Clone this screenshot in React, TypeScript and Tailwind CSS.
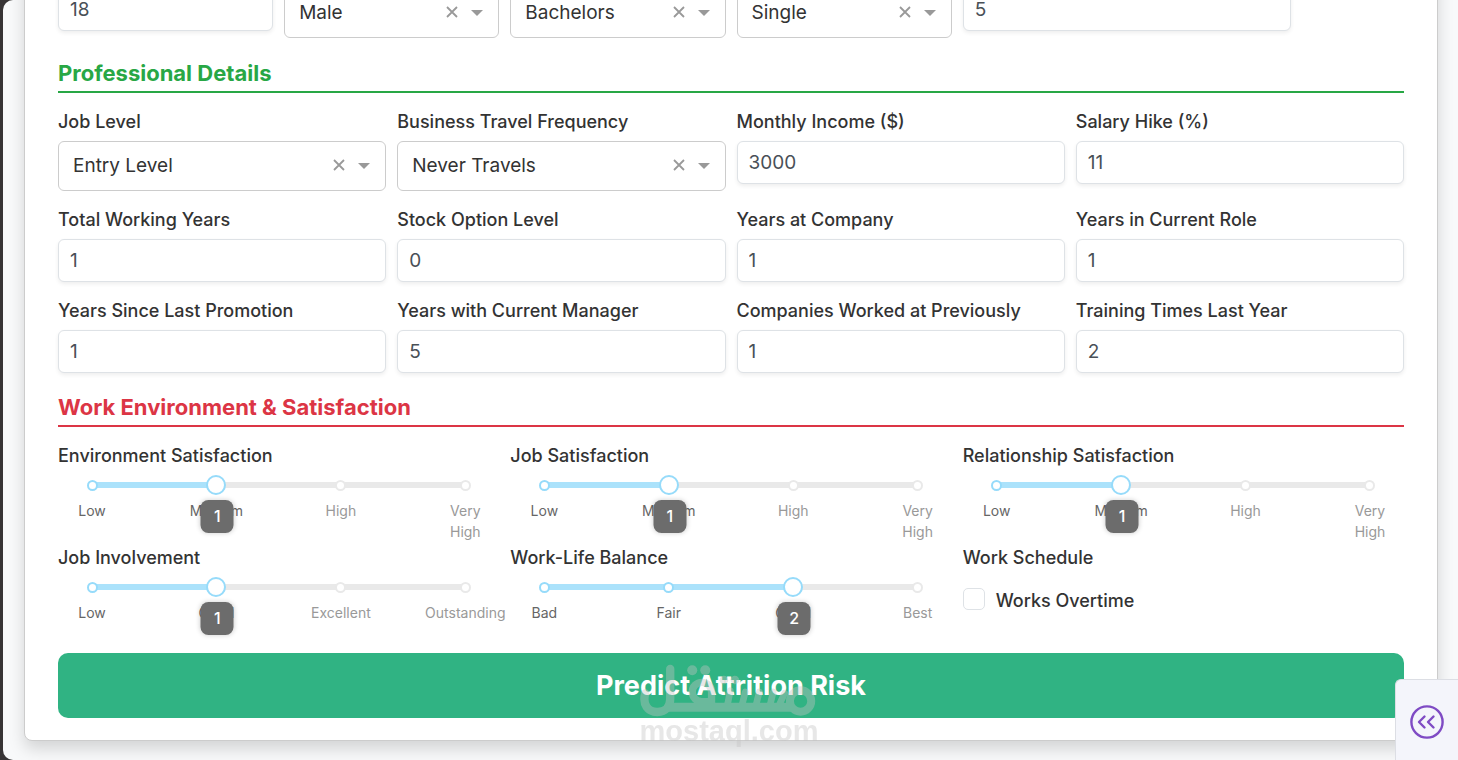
import React, { useId, useState } from "react";

function TextField({ label, value }: { label: string; value: string }) {
  const id = useId();
  return (
    <div className="flex flex-col gap-[5px]">
      <label htmlFor={id} className="text-[18px] leading-[28px] font-medium text-[#333]">
        {label}
      </label>
      <input
        id={id}
        type="text"
        inputMode="numeric"
        defaultValue={value}
        className="h-[43px] w-full rounded-md border border-[#dee2e6] bg-white px-[11px] text-[19px] text-[#495057] shadow-[0_2px_4px_rgba(0,0,0,0.07)] outline-none"
      />
    </div>
  );
}

function SelectField({ label, options }: { label: string; options: string[] }) {
  const id = useId();
  const [value, setValue] = useState(options[0]);
  return (
    <div className="flex flex-col gap-[5px]">
      <label htmlFor={id} className="text-[18px] leading-[28px] font-medium text-[#333]">
        {label}
      </label>
      <div className="flex h-[50px] items-center rounded-md border border-[#ccc] bg-white pr-[15px] pl-[14px]">
        <select
          id={id}
          value={value}
          onChange={(e) => setValue(e.target.value)}
          className="min-w-0 flex-1 appearance-none bg-transparent text-[19px] text-[#333] outline-none"
        >
          <option value="" />
          {options.map((o) => (
            <option key={o} value={o}>
              {o}
            </option>
          ))}
        </select>
        <button type="button" aria-label={`Clear ${label}`} onClick={() => setValue("")} className="mr-[13px] pb-[2px]">
          <svg width="12" height="12" viewBox="0 0 12 12" stroke="#999" strokeWidth="1.8" fill="none">
            <path d="M1 1L11 11M11 1L1 11" />
          </svg>
        </button>
        <svg width="12" height="6" viewBox="0 0 12 6" fill="#999" aria-hidden="true">
          <path d="M0 0H12L6 6Z" />
        </svg>
      </div>
    </div>
  );
}

function SliderField({ label, marks, initial }: { label: string; marks: string[]; initial: number }) {
  const id = useId();
  const [value, setValue] = useState(initial);
  const last = marks.length - 1;
  const percent = (value / last) * 100;
  return (
    <div className="flex flex-col">
      <label htmlFor={id} className="text-[18px] leading-[28px] font-medium text-[#333]">
        {label}
      </label>
      <div className="relative mx-[34px] pt-[5px]">
        <div className="grid items-center">
          <div className="[grid-area:1/1] h-[6px] rounded-full bg-[#e9e9e9]">
            <div className="h-full rounded-full bg-[#abe2fb]" style={{ width: `${percent}%` }} />
          </div>
          <div className="[grid-area:1/1] flex justify-between">
            {marks.map((m, i) => (
              <span key={m} className="flex w-0 justify-center">
                <span
                  className={`h-[11px] w-[11px] shrink-0 rounded-full border-2 bg-white ${
                    i <= value ? "border-[#96dbfa]" : "border-[#e9e9e9]"
                  }`}
                />
              </span>
            ))}
          </div>
          <input
            id={id}
            type="range"
            min={0}
            max={last}
            value={value}
            onChange={(e) => setValue(Number(e.target.value))}
            className="[grid-area:1/1] z-10 -mx-[10px] h-[20px] appearance-none bg-transparent outline-none [&::-webkit-slider-thumb]:h-[20px] [&::-webkit-slider-thumb]:w-[20px] [&::-webkit-slider-thumb]:appearance-none [&::-webkit-slider-thumb]:rounded-full [&::-webkit-slider-thumb]:border-2 [&::-webkit-slider-thumb]:border-solid [&::-webkit-slider-thumb]:border-[#96dbfa] [&::-webkit-slider-thumb]:bg-white"
          />
        </div>
        <div className="mt-[5px] flex justify-between text-[14px] leading-[21px]">
          {marks.map((m, i) => (
            <span key={m} className="flex w-0 justify-center">
              <span className={`w-min shrink-0 text-center ${i <= value ? "text-[#666]" : "text-[#999]"}`}>{m}</span>
            </span>
          ))}
        </div>
        <output
          htmlFor={id}
          className="absolute top-[30px] z-20 ml-px flex h-[33px] w-[33px] -translate-x-1/2 items-center justify-center rounded-lg bg-[#6c6c6c] pb-px text-[16px] font-medium text-white shadow-[0_0_5px_rgba(0,0,0,0.2)]"
          style={{ left: `${percent}%` }}
        >
          {value}
        </output>
      </div>
    </div>
  );
}

function Watermark() {
  return (
    <div className="pointer-events-none fixed bottom-[15px] left-1/2 flex -translate-x-1/2 flex-col items-center opacity-40">
      <svg width="178" height="54" viewBox="30 24 534 162" fill="none" stroke="#c3c3c3" strokeLinecap="round" strokeLinejoin="round" aria-hidden="true">
        <path strokeWidth="25" d="M47 112C38 146 55 168 83 168C110 168 122 148 122 128V39" />
        <path strokeWidth="27" strokeLinecap="butt" d="M108 154H490" />
        <path strokeWidth="22" d="M246 150V108A29 29 0 1 0 217 137H246" />
        <path strokeWidth="20" d="M294 145L302 104M338 145L347 108M380 145L389 108M422 145L431 108M451 142L465 112" />
        <circle cx="513" cy="135" r="32" strokeWidth="24" />
        <g fill="#c3c3c3" stroke="none">
          <circle cx="188" cy="43" r="15" />
          <circle cx="227" cy="43" r="15" />
          <circle cx="283" cy="72" r="13" />
          <circle cx="316" cy="72" r="13" />
        </g>
      </svg>
      <span className="font-['Liberation_Sans',sans-serif] text-[29px] leading-[27px] font-bold text-[#c3c3c3]">
        mostaql.com
      </span>
    </div>
  );
}

function SectionTitle({ children, tone }: { children: React.ReactNode; tone: string }) {
  return <h2 className={`mt-5 mb-[15px] border-b-2 pb-[4px] text-[22px] leading-[28px] font-bold ${tone}`}>{children}</h2>;
}

const satisfaction = ["Low", "Medium", "High", "Very High"];

export default function App() {
  return (
    <div className="h-screen overflow-hidden bg-[#373435] pl-[3px] font-['Inter',sans-serif]">
      <main className="flex h-full flex-col justify-end rounded-l-[10px] bg-[#f8f9fa] pr-[20px] pb-[19px] pl-[21px]">
        <form
          onSubmit={(e) => e.preventDefault()}
          className="shrink-0 rounded-lg border border-[#ccc] bg-white px-[33px] pb-[22px] shadow-[0_8px_16px_rgba(0,0,0,0.15)]"
        >
          <div className="grid grid-cols-12 items-start gap-x-[11px] pb-px">
            <div className="col-span-2">
              <TextField label="Age" value="18" />
            </div>
            <div className="col-span-2">
              <SelectField label="Gender" options={["Male", "Female"]} />
            </div>
            <div className="col-span-2">
              <SelectField label="Education" options={["Bachelors", "Masters"]} />
            </div>
            <div className="col-span-2">
              <SelectField label="Marital Status" options={["Single", "Married"]} />
            </div>
            <div className="col-span-3">
              <TextField label="Distance From Home" value="5" />
            </div>
          </div>

          <SectionTitle tone="border-[#28a745] text-[#28a745]">Professional Details</SectionTitle>
          <div className="grid grid-cols-4 items-start gap-x-[11px] gap-y-[15px]">
            <SelectField label="Job Level" options={["Entry Level", "Senior Level"]} />
            <SelectField label="Business Travel Frequency" options={["Never Travels", "Travels Often"]} />
            <TextField label="Monthly Income ($)" value="3000" />
            <TextField label="Salary Hike (%)" value="11" />
            <TextField label="Total Working Years" value="1" />
            <TextField label="Stock Option Level" value="0" />
            <TextField label="Years at Company" value="1" />
            <TextField label="Years in Current Role" value="1" />
            <TextField label="Years Since Last Promotion" value="1" />
            <TextField label="Years with Current Manager" value="5" />
            <TextField label="Companies Worked at Previously" value="1" />
            <TextField label="Training Times Last Year" value="2" />
          </div>

          <SectionTitle tone="border-[#dc3545] text-[#dc3545]">Work Environment &amp; Satisfaction</SectionTitle>
          <div className="grid auto-rows-[102px] grid-cols-3 gap-x-[11px]">
            <SliderField label="Environment Satisfaction" marks={satisfaction} initial={1} />
            <SliderField label="Job Satisfaction" marks={satisfaction} initial={1} />
            <SliderField label="Relationship Satisfaction" marks={satisfaction} initial={1} />
            <SliderField label="Job Involvement" marks={["Low", "Good", "Excellent", "Outstanding"]} initial={1} />
            <SliderField label="Work-Life Balance" marks={["Bad", "Fair", "Good", "Best"]} initial={2} />
            <fieldset>
              <legend className="text-[18px] leading-[28px] font-medium text-[#333]">Work Schedule</legend>
              <label className="mt-[15px] flex items-start gap-[11px] text-[18px] leading-[28px] font-medium text-[#333]">
                <input
                  type="checkbox"
                  className="mt-px h-[22px] w-[22px] appearance-none rounded-[5px] border border-[#dee2e6] bg-white checked:bg-[#0d6efd]"
                />
                Works Overtime
              </label>
            </fieldset>
          </div>

          <button
            type="submit"
            className="mt-[7px] h-[65px] w-full rounded-[10px] bg-[#30b383] pt-[2px] text-[27px] font-bold text-white"
          >
            Predict Attrition Risk
          </button>
        </form>
      </main>

      <Watermark />

      <button
        type="button"
        aria-label="Open side panel"
        className="fixed right-0 bottom-0 flex h-[81px] w-[63px] items-center justify-center rounded-tl-md border-t border-l border-[#dcdee4] bg-[#f4f5fb] pt-[3px]"
      >
        <svg width="34" height="34" viewBox="0 0 34 34" fill="none" stroke="#7f4bc4" strokeWidth="2.4" strokeLinecap="round" strokeLinejoin="round">
          <circle cx="17" cy="17" r="15.6" />
          <path d="M14.5 11.5L9 17L14.5 22.5M23.5 11.5L18 17L23.5 22.5" />
        </svg>
      </button>
    </div>
  );
}
